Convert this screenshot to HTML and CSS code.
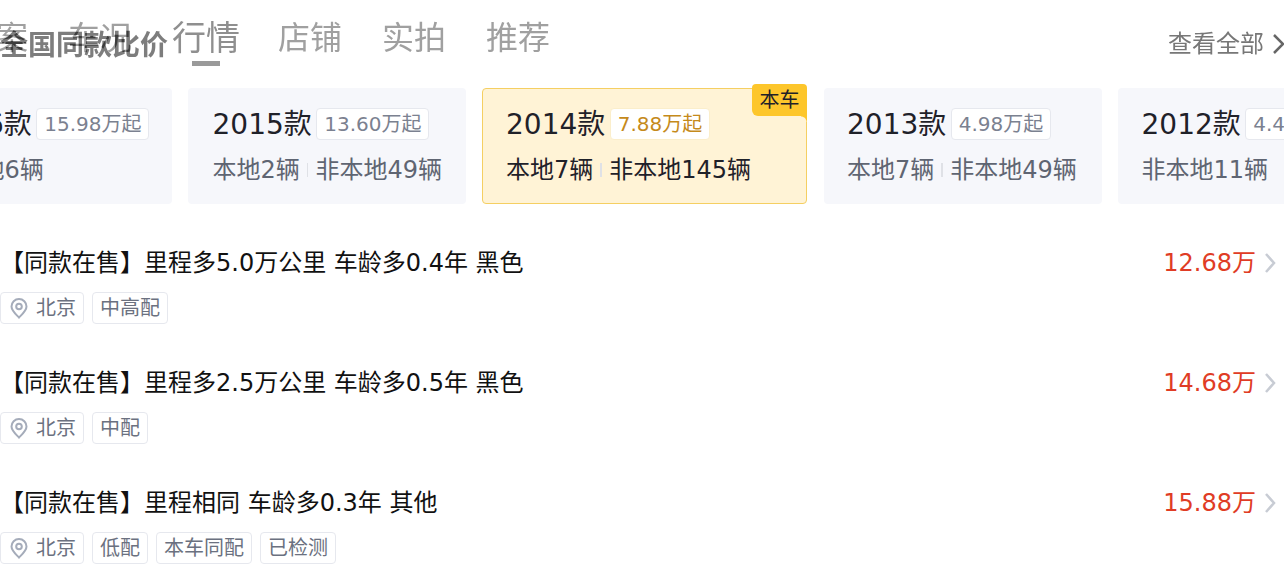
FILE: index.html
```html
<!DOCTYPE html>
<html lang="zh-CN">

<head>
    <meta charset="UTF-8">
    <title>全国同款比价</title>
    <link rel="stylesheet" href="styles.css">
</head>

<body>
    <div class="page">
        <header class="top">
            <nav class="tabs">
                <span class="tab">方案</span>
                <span class="tab">车况</span>
                <span class="tab tab-active">行情</span>
                <span class="tab">店铺</span>
                <span class="tab">实拍</span>
                <span class="tab">推荐</span>
            </nav>
            <h2 class="title">全国同款比价</h2>
            <a class="more">查看全部
                <svg class="more-icon" width="13" height="22" viewBox="0 0 13 22"><path d="M2 2l9 9-9 9" fill="none" stroke="#666" stroke-width="2.500"/></svg>
            </a>
        </header>

        <div class="years">
            <div class="year year-cut">
                <div class="year-head"><span class="year-name">2016款</span><span class="price">15.98万起</span></div>
                <div class="year-count"><span>非本地6辆</span></div>
            </div>
            <div class="year">
                <div class="year-head"><span class="year-name">2015款</span><span class="price">13.60万起</span></div>
                <div class="year-count"><span>本地2辆</span><i class="sep"></i><span>非本地49辆</span></div>
            </div>
            <div class="year year-on">
                <span class="badge">本车</span>
                <div class="year-head"><span class="year-name">2014款</span><span class="price">7.88万起</span></div>
                <div class="year-count"><span>本地7辆</span><i class="sep"></i><span>非本地145辆</span></div>
            </div>
            <div class="year">
                <div class="year-head"><span class="year-name">2013款</span><span class="price">4.98万起</span></div>
                <div class="year-count"><span>本地7辆</span><i class="sep"></i><span>非本地49辆</span></div>
            </div>
            <div class="year">
                <div class="year-head"><span class="year-name">2012款</span><span class="price">4.48万起</span></div>
                <div class="year-count"><span>非本地11辆</span></div>
            </div>
        </div>

        <ul class="cars">
            <li class="car">
                <div class="car-main">
                    <div class="car-title">【同款在售】里程多5.0万公里 车龄多0.4年 黑色</div>
                    <div class="tags">
                        <span class="tag"><svg class="pin" width="22" height="22" viewBox="0 0 22 22"><path d="M11 20.500c-4.500-4.500-7.500-7-7.500-11a7.500 7.500 0 0 1 15 0c0 4-3 6.500-7.500 11z" fill="none" stroke="#a5acba" stroke-width="2"/><circle cx="11" cy="9.500" r="2.800" fill="none" stroke="#a5acba" stroke-width="2"/></svg>北京</span>
                        <span class="tag">中高配</span>
                    </div>
                </div>
                <div class="car-price">12.68万<svg width="12" height="22" viewBox="0 0 12 22"><path d="M2 2l8 9-8 9" fill="none" stroke="#c8ccd4" stroke-width="2.500"/></svg></div>
            </li>
            <li class="car">
                <div class="car-main">
                    <div class="car-title">【同款在售】里程多2.5万公里 车龄多0.5年 黑色</div>
                    <div class="tags">
                        <span class="tag"><svg class="pin" width="22" height="22" viewBox="0 0 22 22"><path d="M11 20.500c-4.500-4.500-7.500-7-7.500-11a7.500 7.500 0 0 1 15 0c0 4-3 6.500-7.500 11z" fill="none" stroke="#a5acba" stroke-width="2"/><circle cx="11" cy="9.500" r="2.800" fill="none" stroke="#a5acba" stroke-width="2"/></svg>北京</span>
                        <span class="tag">中配</span>
                    </div>
                </div>
                <div class="car-price">14.68万<svg width="12" height="22" viewBox="0 0 12 22"><path d="M2 2l8 9-8 9" fill="none" stroke="#c8ccd4" stroke-width="2.500"/></svg></div>
            </li>
            <li class="car">
                <div class="car-main">
                    <div class="car-title">【同款在售】里程相同 车龄多0.3年 其他</div>
                    <div class="tags">
                        <span class="tag"><svg class="pin" width="22" height="22" viewBox="0 0 22 22"><path d="M11 20.500c-4.500-4.500-7.500-7-7.500-11a7.500 7.500 0 0 1 15 0c0 4-3 6.500-7.500 11z" fill="none" stroke="#a5acba" stroke-width="2"/><circle cx="11" cy="9.500" r="2.800" fill="none" stroke="#a5acba" stroke-width="2"/></svg>北京</span>
                        <span class="tag">低配</span>
                        <span class="tag">本车同配</span>
                        <span class="tag">已检测</span>
                    </div>
                </div>
                <div class="car-price">15.88万<svg width="12" height="22" viewBox="0 0 12 22"><path d="M2 2l8 9-8 9" fill="none" stroke="#c8ccd4" stroke-width="2.500"/></svg></div>
            </li>
        </ul>
    </div>
</body>
</html>
```

FILE: styles.css
```css
* {
    margin: 0;
    padding: 0;
    box-sizing: border-box;
}

html,
body {
    height: 564px;
    overflow: hidden;
}

body {
    background-color: #ffffff;
    color: #1f2129;
    font-family: "DejaVu Sans", "Noto Sans CJK SC", sans-serif;
}

.page {
    width: 1284px;
    height: 564px;
    overflow: hidden;
}

.top {
    position: relative;
    height: 88px;
    isolation: isolate;
}

/* tabs are scrolled left behind the title */
.tabs {
    position: absolute;
    left: -36px;
    top: 15px;
    display: flex;
    align-items: center;
    gap: 40px;
    font-size: 32px;
    line-height: 46px;
    color: #a0a0a0;
}

.tab-active {
    position: relative;
    margin-right: -2px;
    font-size: 34px;
    color: #8f8f8f;
}

.tab-active::after {
    content: "";
    position: absolute;
    left: 20px;
    bottom: -5px;
    width: 28px;
    height: 5px;
    background-color: #9a9a9a;
}

/* strokes go dark where the title crosses the tabs */
.title {
    position: absolute;
    left: 0;
    top: 26px;
    font-size: 28px;
    line-height: 40px;
    font-weight: bold;
    color: #7d7d7d;
    mix-blend-mode: color-burn;
}

.more {
    position: absolute;
    right: -1px;
    top: 26px;
    display: flex;
    align-items: center;
    gap: 8px;
    font-size: 24px;
    line-height: 36px;
    color: #777777;
}

.years {
    display: flex;
    gap: 16px;
    margin-left: -112px;
    width: 1500px;
}

.year {
    position: relative;
    flex: none;
    width: 278px;
    height: 116px;
    padding: 18px 24px 0;
    background-color: #f6f7fb;
    border-radius: 4px;
}

.year:nth-child(2) {
    padding-left: 24.5px;
}

.year:nth-child(4) {
    padding-left: 23px;
}

.year:nth-child(5) {
    padding-left: 23.5px;
}

.year-cut {
    width: 284px;
    padding-left: 44.5px;
}

.year-on {
    width: 325px;
    margin-right: 1px;
    background-color: #fff3d6;
    border: 1px solid #f5cf62;
    padding: 17px 23px 0;
}

.year-head {
    display: flex;
    align-items: center;
    gap: 4.5px;
    height: 36px;
}

.year-name {
    margin-top: 2px;
    font-size: 28px;
    line-height: 36px;
    white-space: nowrap;
}

.price {
    height: 32px;
    padding: 0 6.5px 0 7px;
    border: 1px solid #e6e8ee;
    border-radius: 4px;
    background-color: #ffffff;
    font-size: 20px;
    line-height: 30px;
    color: #7b8190;
    white-space: nowrap;
}

.year-on .price {
    color: #c58a1b;
    border-color: #fbeecb;
}

.year-count {
    display: flex;
    align-items: center;
    margin-top: 10px;
    font-size: 24px;
    line-height: 36px;
    color: #5f6572;
    white-space: nowrap;
}

.year-on .year-count {
    color: #1f2129;
}

.sep {
    width: 2px;
    height: 14px;
    margin: 0 7px;
    background-color: #dfe1e6;
}

.badge {
    position: absolute;
    right: -1px;
    top: -5px;
    width: 55px;
    height: 32px;
    background-color: #fdc62b;
    border-radius: 4px 4px 0 6px;
    font-size: 20px;
    line-height: 32px;
    text-align: center;
    color: #1f2129;
}

.badge::after {
    content: "";
    position: absolute;
    right: 0;
    top: 100%;
    width: 6px;
    height: 6px;
    background: radial-gradient(circle at 0 100%, #fff3d6 5px, #fdc62b 6px);
}

.cars {
    list-style: none;
    margin-top: 41px;
}

.car {
    display: flex;
    justify-content: space-between;
    height: 120px;
}

.car-title {
    font-size: 24px;
    line-height: 36px;
    color: #111111;
    white-space: nowrap;
}

.tags {
    display: flex;
    gap: 8px;
    margin-top: 11px;
}

.tag {
    display: flex;
    align-items: center;
    height: 32px;
    padding: 0 7px 3px;
    border: 1px solid #e6e8ee;
    border-radius: 4px;
    font-size: 20px;
    color: #6b7180;
}

.pin {
    margin-right: 6px;
    margin-top: 2px;
}

.car-price {
    display: flex;
    align-items: center;
    gap: 8px;
    height: 36px;
    padding-right: 8px;
    font-size: 24px;
    line-height: 36px;
    color: #e03c25;
}
```
